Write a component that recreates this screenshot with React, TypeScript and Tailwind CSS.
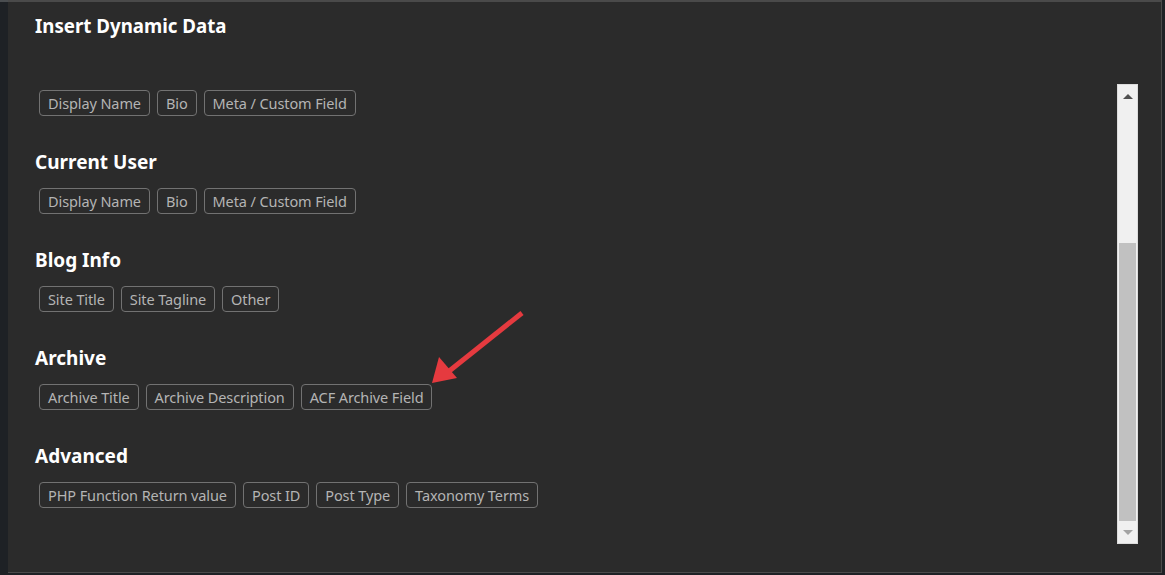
import React from "react";

const FONT = { fontFamily: '"Noto Sans", "Open Sans", sans-serif' };

type Section = { title?: string; items: string[] };

const SECTIONS: Section[] = [
  { items: ["Display Name", "Bio", "Meta / Custom Field"] },
  { title: "Current User", items: ["Display Name", "Bio", "Meta / Custom Field"] },
  { title: "Blog Info", items: ["Site Title", "Site Tagline", "Other"] },
  { title: "Archive", items: ["Archive Title", "Archive Description", "ACF Archive Field"] },
  {
    title: "Advanced",
    items: ["PHP Function Return value", "Post ID", "Post Type", "Taxonomy Terms"],
  },
];

function Chip({ label }: { label: string }) {
  return (
    <button className="h-[26px] rounded-[4px] border border-[#727272] px-[8px] text-[14.5px] leading-none tracking-[-0.1px] text-[#b4b4b4]">
      {label}
    </button>
  );
}

function Scrollbar() {
  return (
    <div className="flex h-[460px] w-[21px] flex-col border border-[#dcdcdc] bg-[#f0f0f0]">
      <div className="flex h-[22px] items-center justify-center">
        <div className="h-0 w-0 border-x-[5px] border-b-[5px] border-x-transparent border-b-[#505050]" />
      </div>
      <div className="flex flex-1 flex-col justify-end px-[1px]">
        <div className="h-[278px] bg-[#c1c1c1]" />
      </div>
      <div className="flex h-[22px] items-center justify-center">
        <div className="h-0 w-0 border-x-[5px] border-t-[5px] border-x-transparent border-t-[#a3a3a3]" />
      </div>
    </div>
  );
}

export default function App() {
  return (
    <div className="flex h-[575px] w-[1165px] bg-[#1e2125]" style={FONT}>
      <div className="w-[8px] border-t-2 border-[#4a4d50]" />
      <div className="relative mb-[2px] mr-[3px] flex flex-1 flex-col border-r border-b border-t-2 border-[#4a4a4a] bg-[#2b2b2b]">
        <h1 className="pl-[27px] pt-[12px] text-[18.7px] font-bold leading-[24px] text-white">
          Insert Dynamic Data
        </h1>

        <div className="mt-[46px] flex">
          <div className="h-[460px] flex-1 overflow-hidden pl-[27px] pt-[6px]">
            <div className="flex flex-col gap-[33px]">
              {SECTIONS.map((s, i) => (
                <div key={i} className="flex flex-col">
                  {s.title && (
                    <h2 className="mb-[13px] text-[19px] font-bold leading-[26px] text-white">
                      {s.title}
                    </h2>
                  )}
                  <div className="flex gap-[7px] pl-[4px]">
                    {s.items.map((it) => (
                      <Chip key={it} label={it} />
                    ))}
                  </div>
                </div>
              ))}
            </div>
          </div>
          <div className="mr-[23px]">
            <Scrollbar />
          </div>
        </div>

        {/* annotation arrow */}
        <svg
          className="pointer-events-none absolute left-0 top-0"
          width="1160"
          height="575"
          viewBox="0 0 1160 575"
        >
          <line x1="514" y1="311" x2="440" y2="370" stroke="#e53a3f" strokeWidth="5" strokeLinecap="butt" />
          <polygon points="424,381 431,355 449,376" fill="#e53a3f" />
        </svg>
      </div>
    </div>
  );
}
